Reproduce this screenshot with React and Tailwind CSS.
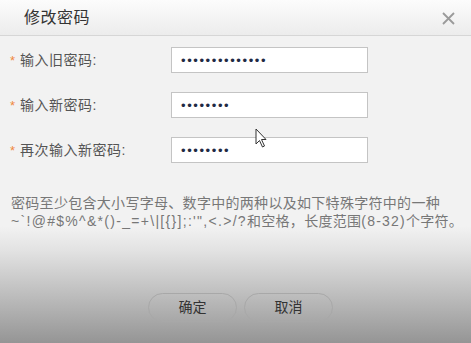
import React from 'react';

const font = { fontFamily: '"Liberation Sans", "Noto Sans CJK SC", sans-serif' };

const Field = ({ label, dots }) => (
  <div className="flex items-center h-[26px]">
    <div className="w-[171px] flex items-center pl-[10px] text-[14px] text-[#555]">
      <span className="text-[#f0883c] mr-[5px] text-[13px] mt-[2px]">*</span>
      <span className="tracking-[0.5px]">{label}</span>
    </div>
    <div className="w-[197px] h-[26px] bg-white border border-[#c4c4c4] flex items-center pl-[9px]">
      <span className="text-[13px] text-[#1f2a44] tracking-[1.6px] leading-none">{'•'.repeat(dots)}</span>
    </div>
  </div>
);

const App = () => {
  return (
    <div className="relative w-[471px] h-[343px] overflow-hidden flex flex-col" style={font}>
      <div className="h-[36px] shrink-0 flex items-center justify-between pl-[24px] pr-[16px] bg-[linear-gradient(to_bottom,#fcfcfc,#ececec)] border-b border-[#d6d6d6]">
        <span className="text-[16px] text-[#333] tracking-[0.5px]">修改密码</span>
        <svg width="13" height="13" viewBox="0 0 13 13" className="mt-[1px]">
          <path d="M1 1 L12 12 M12 1 L1 12" stroke="#9a9a9a" strokeWidth="1.8" />
        </svg>
      </div>
      <div className="flex-1 flex flex-col bg-[linear-gradient(to_bottom,#f2f2f2_0%,#f2f2f2_62%,#e2e2e2_70%,#959595_100%)]">
        <div className="flex flex-col gap-[19px] pt-[11px]">
          <Field label="输入旧密码:" dots={14} />
          <Field label="输入新密码:" dots={8} />
          <Field label="再次输入新密码:" dots={8} />
        </div>
        <div className="pl-[11px] pt-[31px] text-[14px] leading-[18px] text-[#777] whitespace-nowrap">
          <div className="tracking-[0.3px]">密码至少包含大小写字母、数字中的两种以及如下特殊字符中的一种</div>
          <div className="tracking-[0.3px]">
            <span className="tracking-[1.3px]">~`!@#$%^&amp;*()-_=+\|[{'{}'}];:'",&lt;.&gt;/?</span>
            和空格，长度范围
            <span className="tracking-[1.2px]">(8-32)</span>
            个字符。
          </div>
        </div>
        <div className="flex gap-[7px] pl-[148px] mt-[63px]">
          <button className="w-[89px] h-[29px] rounded-full border border-[#a8a8a8] text-[14px] text-[#333] bg-transparent">确定</button>
          <button className="w-[89px] h-[29px] rounded-full border border-[#a8a8a8] text-[14px] text-[#333] bg-transparent">取消</button>
        </div>
      </div>
      <svg className="absolute left-[255px] top-[128px]" width="13" height="21" viewBox="0 0 13 21">
        <path d="M1 1 L1 16 L4.5 12.5 L7.5 19 L9.5 18 L6.5 11.5 L11 11.5 Z" fill="#fff" stroke="#333" strokeWidth="1" strokeLinejoin="round" />
      </svg>
    </div>
  );
};

export default App;
